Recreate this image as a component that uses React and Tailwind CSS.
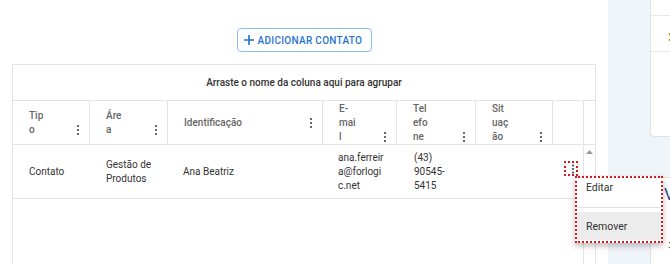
import { useState } from 'react';

const COLS = 'grid grid-cols-[77px_78px_155px_74px_79px_77px_31px_11px]';
const ROW_COLS = 'grid grid-cols-[77px_78px_155px_74px_79px_77px_30px]';

const headers = [
  ['Tip', 'o'],
  ['Áre', 'a'],
  ['Identificação'],
  ['E-', 'mai', 'l'],
  ['Tel', 'efo', 'ne'],
  ['Sit', 'uaç', 'ão'],
];

const row = [
  ['Contato'],
  ['Gestão de', 'Produtos'],
  ['Ana Beatriz'],
  ['ana.ferreir', 'a@forlogi', 'c.net'],
  ['(43)', '90545-', '5415'],
  [],
];

function Kebab() {
  return (
    <svg width="4" height="14" viewBox="0 0 4 14" className="shrink-0">
      <circle cx="2" cy="3" r="1.1" fill="#454545" />
      <circle cx="2" cy="7" r="1.1" fill="#454545" />
      <circle cx="2" cy="11" r="1.1" fill="#454545" />
    </svg>
  );
}

function Lines({ lines }) {
  return (
    <div>
      {lines.map((l, i) => (
        <span key={i} className="block whitespace-nowrap">
          {l}
        </span>
      ))}
    </div>
  );
}

export default function App() {
  const [open] = useState(true);

  return (
    <div className="flex w-[670px] h-[264px] overflow-hidden bg-white font-['Roboto',sans-serif]">
      {/* main content */}
      <div className="w-[608px] shrink-0 pt-[28px] pl-[12px] pr-[12px] flex flex-col">
        <div className="flex justify-center">
          <button className="flex items-center gap-[4px] h-[24px] w-[135px] pl-[6px] border border-[#8fbbe9] rounded-[4px] text-[#1f74cf] text-[10px] font-medium tracking-[0.3px]">
            <svg width="10" height="10" viewBox="0 0 10 10">
              <path d="M5 0V10M0 5H10" stroke="#1f74cf" strokeWidth="1.6" />
            </svg>
            ADICIONAR CONTATO
          </button>
        </div>

        <div className="mt-[12px] flex-1 flex flex-col border border-b-0 border-[#e4e4e4]">
          <div className="h-[36px] shrink-0 flex items-center justify-center border-b border-[#e4e4e4] text-[10px] font-medium text-[#333]">
            Arraste o nome da coluna aqui para agrupar
          </div>

          <div className={`${COLS} h-[44px] shrink-0 border-b border-[#e4e4e4] text-[10px] leading-[14px] font-medium text-[#666]`}>
            {headers.map((lines, i) => (
              <div key={i} className="flex items-center justify-between pl-[16px] pr-[9px] border-r border-[#e4e4e4]">
                <div className="flex items-end justify-between w-full">
                  <Lines lines={lines} />
                  <Kebab />
                </div>
              </div>
            ))}
            <div className="border-r border-[#e4e4e4]" />
            <div />
          </div>

          <div className="flex flex-1">
            <div className="w-[571px] border-r border-[#e4e4e4]">
              <div className={`${ROW_COLS} h-[54px] border-b border-[#e4e4e4] text-[10px] leading-[14px] text-[#333]`}>
                {row.map((lines, i) => (
                  <div key={i} className={`flex items-center ${i === 4 ? 'pl-[17px]' : i === 2 || i === 3 ? 'pl-[15px]' : 'pl-[16px]'}`}>
                    <Lines lines={lines} />
                  </div>
                ))}
                <div className="relative">
                  <button className="absolute left-[11px] top-[16px] w-[14px] h-[15px] flex items-center justify-end pr-[1px] border-2 border-dotted border-[#e0151b]">
                    <svg width="4" height="10" viewBox="0 0 4 10">
                      <circle cx="2" cy="1.5" r="1.1" fill="#454545" />
                      <circle cx="2" cy="5" r="1.1" fill="#454545" />
                      <circle cx="2" cy="8.5" r="1.1" fill="#454545" />
                    </svg>
                  </button>
                  {open && (
                    <div className="absolute z-10 left-[22px] top-[31px] w-[88px] h-[67px] bg-white border-2 border-dotted border-[#e0151b] shadow-[0_3px_6px_rgba(0,0,0,0.25)] text-[10.5px] text-[#333]">
                      <div className="h-[29px] pl-[9px] pt-[3px] leading-[14px]">Editar</div>
                      <div className="border-t border-[#e2e2e2] h-[5px]" />
                      <div className="h-[28px] pl-[9px] pt-[1px] flex items-center bg-[#ececec]">Remover</div>
                    </div>
                  )}
                </div>
              </div>
            </div>
            <div className="flex-1 flex justify-center pt-[5px]">
              <svg width="7" height="4" viewBox="0 0 7 4">
                <path d="M0 4L3.5 0L7 4Z" fill="#9a9a9a" />
              </svg>
            </div>
          </div>
        </div>
      </div>

      {/* side panel */}
      <div className="flex-1 bg-[#eff4f9] pl-[42px] flex flex-col">
        <div className="h-[137px] shrink-0 bg-white border-l border-b border-[#e2e2e2] rounded-bl-[4px] overflow-hidden">
          <div className="h-[20px] border-b border-[#e9e9e9] pl-[17px] -mt-[4px] text-[11px] font-bold text-[#c9791c] leading-[14px]">
            T
          </div>
          <div className="h-[36px] border-b border-[#e9e9e9] pl-[17px] pt-[10px] text-[14px] font-bold text-[#c9791c] leading-[20px]">
            :
          </div>
        </div>
        <div className="mt-[40px] flex-1 bg-white border-l border-t border-[#e2e2e2] rounded-tl-[4px] pl-[13px] pt-[5px] overflow-hidden">
          <div className="text-[17px] leading-[22px] text-[#34489a]">V</div>
          <div className="mt-[32px] pl-[4px] text-[11px] text-[#444]">:</div>
        </div>
      </div>
    </div>
  );
}
